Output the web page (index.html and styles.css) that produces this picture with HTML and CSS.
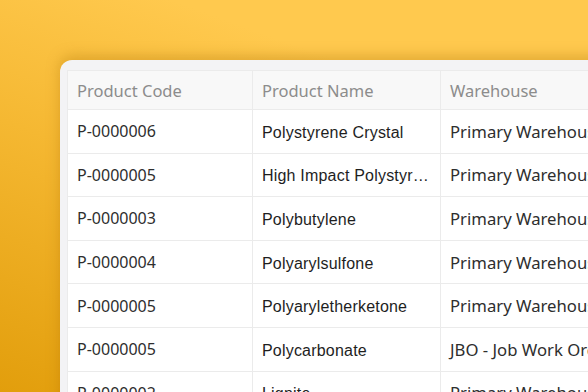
FILE: index.html
```html
<!DOCTYPE html>
<html lang="en">
<head>
    <meta charset="UTF-8">
    <meta name="viewport" content="width=device-width, initial-scale=1.0">
    <title>Products</title>
    <link rel="stylesheet" href="styles.css">
</head>
<body>
    <div class="stage">
        <div class="card">
            <table class="grid">
                <colgroup>
                    <col class="col-code">
                    <col class="col-name">
                    <col class="col-wh">
                </colgroup>
                <thead>
                    <tr>
                        <th>Product Code</th>
                        <th>Product Name</th>
                        <th>Warehouse</th>
                    </tr>
                </thead>
                <tbody>
                    <tr>
                        <td class="code">P-0000006</td>
                        <td class="name">Polystyrene Crystal</td>
                        <td class="wh">Primary Warehouse</td>
                    </tr>
                    <tr>
                        <td class="code">P-0000005</td>
                        <td class="name">High Impact Polystyrene</td>
                        <td class="wh">Primary Warehouse</td>
                    </tr>
                    <tr>
                        <td class="code">P-0000003</td>
                        <td class="name">Polybutylene</td>
                        <td class="wh">Primary Warehouse</td>
                    </tr>
                    <tr>
                        <td class="code">P-0000004</td>
                        <td class="name">Polyarylsulfone</td>
                        <td class="wh">Primary Warehouse</td>
                    </tr>
                    <tr>
                        <td class="code">P-0000005</td>
                        <td class="name">Polyaryletherketone</td>
                        <td class="wh">Primary Warehouse</td>
                    </tr>
                    <tr>
                        <td class="code">P-0000005</td>
                        <td class="name">Polycarbonate</td>
                        <td class="wh">JBO - Job Work Order</td>
                    </tr>
                    <tr>
                        <td class="code">P-0000002</td>
                        <td class="name">Lignite</td>
                        <td class="wh">Primary Warehouse</td>
                    </tr>
                </tbody>
            </table>
        </div>
    </div>
</body>
</html>
```

FILE: styles.css
```css
html, body {
    margin: 0;
    height: 100%;
    overflow: hidden;
}

body {
    background: linear-gradient(200deg, #ffc94e 25%, #f5b832 55%, #e29e0c 100%);
    font-family: "Noto Sans", sans-serif;
}

.stage {
    padding: 60px 0 0 60px;
}

.card {
    width: 700px;
    background-color: #f3f3f5;
    border-radius: 12px 0 0 0;
    padding: 10px 0 0 7px;
    box-shadow: 0 -4px 14px rgba(170, 110, 0, 0.35);
}

.grid {
    border-collapse: collapse;
    table-layout: fixed;
    width: 600px;
    background-color: #fff;
}

.col-code { width: 185px; }
.col-name { width: 188px; }
.col-wh { width: 227px; }

.grid th,
.grid td {
    border: 1px solid #ebebeb;
    text-align: left;
    white-space: nowrap;
    overflow: hidden;
}

.grid th {
    height: 38px;
    padding: 0 9px;
    background-color: #f8f8f8;
    color: #8c8c8c;
    font-weight: normal;
    font-size: 16.5px;
}

.grid td {
    height: 42.6px;
    padding: 0 9px;
    color: #2e2e2e;
    font-size: 16px;
}

.grid td.name {
    font-family: "Liberation Sans", Arial, sans-serif;
    font-size: 16px;
    letter-spacing: 0.2px;
    padding: 3px 7px 0 9px;
    height: 39.6px;
    color: #1e1e1e;
    text-overflow: ellipsis;
}

.grid td.wh {
    font-size: 16.7px;
}
```
